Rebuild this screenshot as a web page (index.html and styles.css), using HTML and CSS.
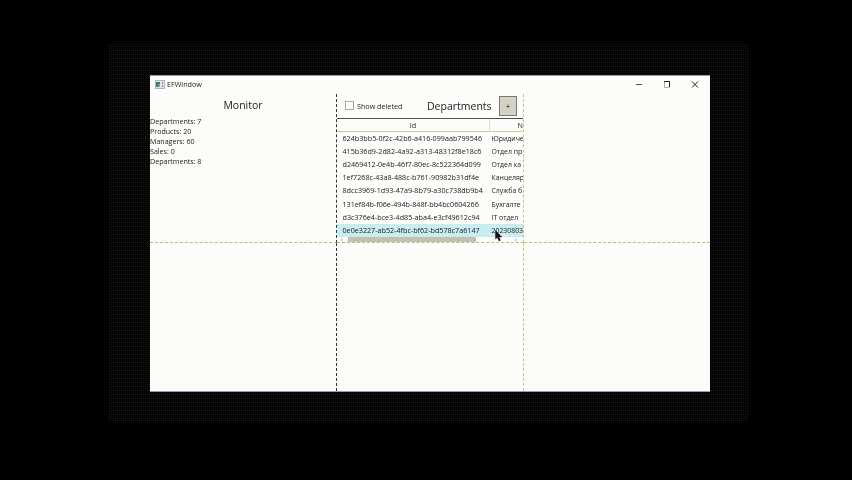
FILE: index.html
```html
<!DOCTYPE html>
<html lang="ru">
<head>
<meta charset="utf-8">
<title>EFWindow</title>
<link rel="stylesheet" href="styles.css">
</head>
<body>
<div class="desktop">
  <main class="window">
    <header class="titlebar">
      <svg class="app-icon" width="10" height="9" viewBox="0 0 10 9"><rect x=".5" y=".5" width="9" height="8" fill="#e4e4ea" stroke="#b4b4be"/><rect x="1" y="2" width="4" height="5" fill="#367c80"/><path d="M3 4h2v3H3z" fill="#70aa80"/><path d="M7.5 2v2M7.5 5v2" stroke="#8c8c96"/></svg>
      <span class="title">EFWindow</span>
      <svg class="controls" width="66" height="10" viewBox="0 0 66 10" fill="none" stroke="#222"><path d="M1 5.5h6" stroke="#555"/><path d="M29 2.5h5.500v5.500" /><path d="M29.500 3v5.500h5" stroke="#aaa"/><path d="M57 2.500l6 6M63 2.500l-6 6"/></svg>
    </header>
    <div class="grid">
      <section class="cell monitor">
        <h1>Monitor</h1>
        <ul><li>Departments: 7</li><li>Products: 20</li><li>Managers: 60</li><li>Sales: 0</li><li>Departments: 8</li></ul>
      </section>
      <section class="cell departments">
        <div class="toolbar">
          <label><span class="box"></span>Show deleted</label>
          <h1>Departments</h1>
          <button>+</button>
        </div>
        <div class="list">
          <div class="row head"><span>Id</span><span>N</span></div>
          <div class="row"><span>624b3bb5-0f2c-42b6-a416-099aab799546</span><span>Юридиче</span></div>
          <div class="row"><span>415b36d9-2d82-4a92-a313-48312f8e18c6</span><span>Отдел пр</span></div>
          <div class="row"><span>d2469412-0e4b-46f7-80ec-8c522364d099</span><span>Отдел ка</span></div>
          <div class="row"><span>1ef7268c-43a8-488c-b761-90982b31df4e</span><span>Канцеляр</span></div>
          <div class="row"><span>8dcc3969-1d93-47a9-8b79-a30c738db9b4</span><span>Служба б</span></div>
          <div class="row"><span>131ef84b-f06e-494b-848f-bb4bc0604266</span><span>Бухгалте</span></div>
          <div class="row"><span>d3c376e4-bce3-4d85-aba4-e3cf49612c94</span><span>IT отдел</span></div>
          <div class="row selected"><span>0e0e3227-ab52-4fbc-bf62-bd578c7a6147</span><span>20230803</span></div>
        </div>
        <div class="scrollbar"><b>‹</b><i></i><b>›</b></div>
      </section>
      <section class="cell"></section>
      <section class="cell"></section>
      <section class="cell"></section>
      <section class="cell"></section>
    </div>
  </main>
  <svg class="cursor" width="8" height="12" viewBox="0 0 8 12"><path d="M.5.5v8.500l1.800-1.600L4 11l1.400-.7L4 7h2.800z" fill="#111" stroke="#222" stroke-width=".5"/></svg>
</div>
</body>
</html>
```
FILE: styles.css
```css
* { box-sizing: border-box; }
body { margin: 0; background: #000; font-family: "Open Sans", "Noto Sans", sans-serif; font-size: 7.2px; color: #222; overflow: hidden; }
.desktop {
  width: 640px; height: 378px; margin: 44px 0 0 109px; padding: 31px 39px 30px 41px;
  background-color: #000;
  background-image:
    conic-gradient(from 0deg at 1px 1px, transparent 270deg, #000055 0),
    conic-gradient(from 0deg at 1px 1px, transparent 270deg, #222200 0);
  background-size: 4px 4px, 2px 2px; background-position: 2px 0, 0 0;
}
.window {
  position: relative; display: flex; flex-direction: column; height: 317px;
  border-top: 1px solid #9a9aaa; border-bottom: 1px solid #9a9aaa; background: #fdfdff;
}
.window::after {
  content: ""; position: absolute; inset: 0; pointer-events: none;
  background-image:
    conic-gradient(from 0deg at 1px 1px, transparent 270deg, #ffff77 0),
    conic-gradient(from 0deg at 1px 1px, transparent 270deg, #ffff77 0);
  background-size: 8px 8px; background-position: 0 0, 4px 4px;
  mix-blend-mode: multiply;
}
.titlebar { display: flex; align-items: center; height: 18px; padding: 0 10px 2px 5px; }
.title { margin-left: 2px; font-size: 7.2px; }
.controls { margin-left: auto; margin-right: -1px; }
.grid { flex: 1; min-height: 0; display: grid; grid-template-columns: 187px 187px 186px; grid-template-rows: 149px 148px; }
.cell { min-width: 0; overflow: hidden; border-right: 1px dashed #c4c490; border-bottom: 1px dashed #b8b88c; }
.cell:nth-child(3n+1) { border-right-color: #333; }
.cell:nth-child(3n) { border-right: 0; }
.cell:nth-child(n+4) { border-bottom: 0; }
h1 { margin: 0; font-size: 10.5px; line-height: 22px; font-weight: 400; }
.monitor h1 { text-align: center; }
ul { list-style: none; margin: 0; padding: 0; font-size: 7.1px; line-height: 10px; }
.toolbar { display: flex; align-items: center; height: 25px; padding: 0 6px 1px 8px; border-bottom: 1px solid #445550; }
label { display: flex; align-items: center; gap: 3px; width: 82px; white-space: nowrap; }
.box { width: 9px; height: 9px; border: 1px solid #aaa; }
button { margin-left: auto; width: 18px; height: 20px; padding: 0; border: 1px solid #777; background: #d2d2c6; font: inherit; }
.row { display: grid; grid-template-columns: 149px 1fr; height: 13.1px; line-height: 13px; padding-left: 5.5px; white-space: nowrap; }
.row:not(.head) span + span { font-size: 6.9px; }
.head { padding-left: 0; grid-template-columns: 152px 34px; text-align: center; border-bottom: 1px solid #c8c8a8; }
.head span + span { border-left: 1px solid #ddd; text-align: right; }
.selected { background: #c8edf5; }
.scrollbar { display: flex; height: 6px; padding-left: 4px; font-size: 7px; line-height: 5px; color: #777; }
.scrollbar b { width: 7px; font-weight: 400; }
.scrollbar i { width: 128px; height: 6px; margin-right: 39px; background: #c2c2b4; }
.cursor { position: absolute; left: 495px; top: 230px; }
```
